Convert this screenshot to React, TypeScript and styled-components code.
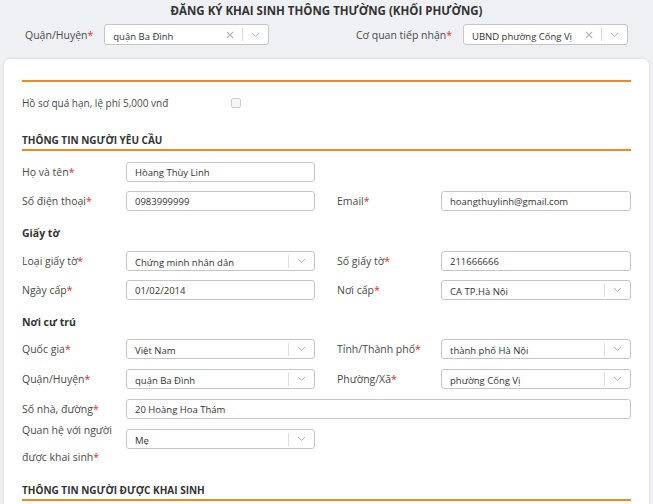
import styled, { createGlobalStyle } from 'styled-components'

const GlobalStyle = createGlobalStyle`
    html, body {
        margin: 0;
        padding: 0;
        background: #eef0f4;
        font-family: "Open Sans", "Noto Sans", sans-serif;
        color: #444;
    }
`

const Page = styled.div`
    width: 653px;
    min-height: 504px;
    overflow: hidden;
`

const Title = styled.h1`
    margin: 0;
    height: 20px;
    line-height: 22px;
    text-align: center;
    font-size: 11.5px;
    font-weight: 700;
    color: #333;
`

const TopBar = styled.div`
    display: flex;
    justify-content: space-between;
    align-items: center;
    margin-top: 4px;
    padding: 0 25px;
`

const TopField = styled.div`
    display: flex;
    align-items: center;
    gap: 11px;
`

const Label = styled.label<{ $tall?: boolean }>`
    font-size: 10.5px;
    color: #4a4a4a;
    line-height: ${p => (p.$tall ? '27px' : '20px')};
    margin-top: ${p => (p.$tall ? '-12px' : '0')};
`

const Req = styled.span`
    color: #e8262a;
`

const Box = styled.div<{ $w?: number }>`
    display: flex;
    align-items: center;
    box-sizing: border-box;
    width: ${p => (p.$w ? `${p.$w}px` : '100%')};
    height: ${p => (p.$w ? '21px' : '20px')};
    border: 1px solid #c6c6c6;
    border-radius: 3px;
    background: #fff;
    font-size: 9.5px;
    color: #333;
`

const Value = styled.span<{ $low?: boolean }>`
    flex: 1;
    padding-left: 8px;
    padding-top: ${p => (p.$low ? '3px' : '0')};
    white-space: nowrap;
    overflow: hidden;
`

const IconCell = styled.span`
    display: flex;
    align-items: center;
    justify-content: center;
    width: 25px;
    height: 14px;
`

const Divider = styled.span`
    width: 1px;
    height: 13px;
    background: #dcdcdc;
`

const Card = styled.div`
    margin: 14px 0 0 4px;
    width: 645px;
    box-sizing: border-box;
    padding: 21px 18px 60px 18px;
    background: #fff;
    border-radius: 6px 6px 0 0;
    box-shadow: 0 0 3px rgba(0, 0, 0, 0.12);
`

const Rule = styled.div`
    height: 2px;
    background: #f08a1c;
`

const CheckRow = styled.div`
    display: flex;
    align-items: center;
    height: 20px;
    margin-top: 11px;
`

const CheckText = styled.span`
    width: 209px;
    font-size: 10px;
    color: #4a4a4a;
`

const CheckBox = styled.span`
    width: 8px;
    height: 8px;
    border: 1px solid #cfcfcf;
    border-radius: 2px;
    background: #f6f6f6;
`

const SectionTitle = styled.div<{ $top: number }>`
    margin-top: ${p => p.$top}px;
    font-size: 10px;
    font-weight: 700;
    color: #333;
    line-height: 16px;
    padding-bottom: 1px;
    border-bottom: 2px solid #f08a1c;
`

const SubTitle = styled.div`
    margin-top: 14px;
    font-size: 10.5px;
    font-weight: 700;
    color: #333;
    line-height: 16px;
`

const Group = styled.div<{ $gap: number; $top: number }>`
    display: flex;
    flex-direction: column;
    gap: ${p => p.$gap}px;
    margin-top: ${p => p.$top}px;
`

const Row = styled.div`
    display: flex;
    gap: 22px;
`

const Field = styled.div<{ $w: number; $tall?: boolean }>`
    display: grid;
    grid-template-columns: 104px 1fr;
    align-items: ${p => (p.$tall ? 'start' : 'center')};
    width: ${p => p.$w}px;
`

function Clear() {
    return (
        <svg width="8" height="8" viewBox="0 0 8 8">
            <path d="M1 1 L7 7 M7 1 L1 7" stroke="#b5b5b5" strokeWidth="1.1" fill="none" />
        </svg>
    )
}

function Chevron() {
    return (
        <svg width="9" height="6" viewBox="0 0 9 6">
            <path d="M1 1 L4.5 4.5 L8 1" stroke="#b8b8b8" strokeWidth="1" fill="none" />
        </svg>
    )
}

function Select({ value, w, clear, low }: { value: string; w?: number; clear?: boolean; low?: boolean }) {
    return (
        <Box $w={w}>
            <Value $low={low}>{value}</Value>
            {clear && (
                <IconCell>
                    <Clear />
                </IconCell>
            )}
            <Divider />
            <IconCell>
                <Chevron />
            </IconCell>
        </Box>
    )
}

function Input({ value }: { value: string }) {
    return (
        <Box>
            <Value>{value}</Value>
        </Box>
    )
}

function F({ label, w = 293, tall, children }: { label: string; w?: number; tall?: boolean; children: React.ReactNode }) {
    return (
        <Field $w={w} $tall={tall}>
            <Label $tall={tall}>
                {label}
                <Req>*</Req>
            </Label>
            {children}
        </Field>
    )
}

export default function App() {
    return (
        <Page>
            <GlobalStyle />
            <Title>ĐĂNG KÝ KHAI SINH THÔNG THƯỜNG (KHỐI PHƯỜNG)</Title>
            <TopBar>
                <TopField>
                    <Label>Quận/Huyện<Req>*</Req></Label>
                    <Select value="quận Ba Đình" w={165} clear low />
                </TopField>
                <TopField>
                    <Label>Cơ quan tiếp nhận<Req>*</Req></Label>
                    <Select value="UBND phường Cống Vị" w={165} clear low />
                </TopField>
            </TopBar>
            <Card>
                <Rule />
                <CheckRow>
                    <CheckText>Hồ sơ quá hạn, lệ phí 5,000 vnđ</CheckText>
                    <CheckBox />
                </CheckRow>
                <SectionTitle $top={19}>THÔNG TIN NGƯỜI YÊU CẦU</SectionTitle>
                <Group $gap={9} $top={11}>
                    <Row>
                        <F label="Họ và tên"><Input value="Hòang Thùy Linh" /></F>
                    </Row>
                    <Row>
                        <F label="Số điện thoại"><Input value="0983999999" /></F>
                        <F label="Email" w={294}><Input value="hoangthuylinh@gmail.com" /></F>
                    </Row>
                </Group>
                <SubTitle>Giấy tờ</SubTitle>
                <Group $gap={9} $top={10}>
                    <Row>
                        <F label="Loại giấy tờ"><Select value="Chứng minh nhân dân" low /></F>
                        <F label="Số giấy tờ" w={294}><Input value="211666666" /></F>
                    </Row>
                    <Row>
                        <F label="Ngày cấp"><Input value="01/02/2014" /></F>
                        <F label="Nơi cấp" w={294}><Select value="CA TP.Hà Nội" low /></F>
                    </Row>
                </Group>
                <SubTitle>Nơi cư trú</SubTitle>
                <Group $gap={10} $top={9}>
                    <Row>
                        <F label="Quốc gia"><Select value="Việt Nam" low /></F>
                        <F label="Tỉnh/Thành phố" w={294}><Select value="thành phố Hà Nội" low /></F>
                    </Row>
                    <Row>
                        <F label="Quận/Huyện"><Select value="quận Ba Đình" low /></F>
                        <F label="Phường/Xã" w={294}><Select value="phường Cống Vị" low /></F>
                    </Row>
                    <Row>
                        <F label="Số nhà, đường" w={609}><Input value="20 Hoàng Hoa Thám" /></F>
                    </Row>
                    <Row>
                        <F label="Quan hệ với người được khai sinh" tall><Select value="Mẹ" low /></F>
                    </Row>
                </Group>
                <SectionTitle $top={11}>THÔNG TIN NGƯỜI ĐƯỢC KHAI SINH</SectionTitle>
            </Card>
        </Page>
    )
}
